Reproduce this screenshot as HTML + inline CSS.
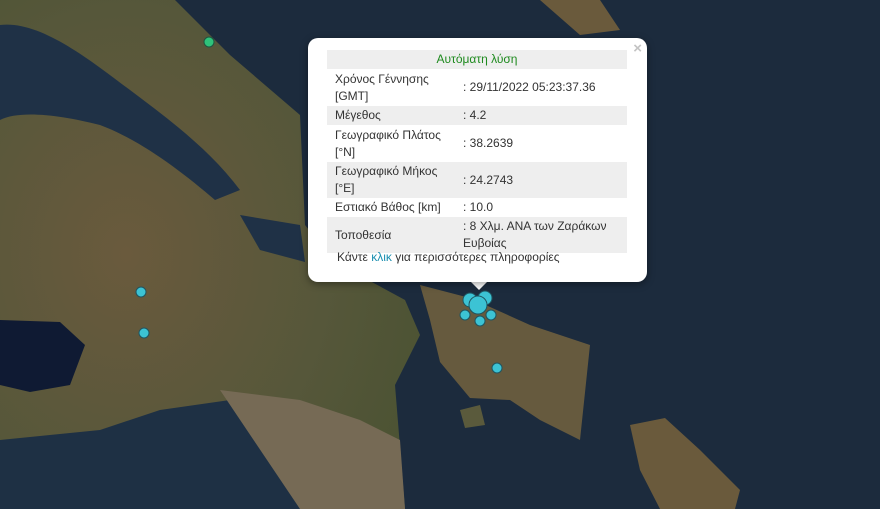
<!DOCTYPE html>
<html><head><meta charset="utf-8"><style>
body{margin:0;width:880px;height:509px;overflow:hidden;font-family:"Liberation Sans",sans-serif;position:relative;background:#1d2c3e}
svg{position:absolute;left:0;top:0}
.pop{position:absolute;left:308px;top:38px;width:339px;height:244px;background:#fff;border-radius:10px;box-shadow:0 2px 8px rgba(0,0,0,.4)}
.tip{position:absolute;left:470px;top:281px;width:0;height:0;border-left:9px solid transparent;border-right:9px solid transparent;border-top:9px solid #fff}
.x{position:absolute;right:5px;top:2px;color:#c3c3c3;font-size:15px;font-weight:bold}
table{position:absolute;left:19px;top:12px;width:300px;border-collapse:collapse;font-size:12px;color:#333;line-height:17px}
td{padding:1px 8px;vertical-align:middle}
tr.g{background:#eee}
.f{position:absolute;left:29px;top:212px;font-size:12px;color:#333}
</style></head><body>
<svg width="880" height="509" viewBox="0 0 880 509">
<defs><radialGradient id="lg" cx=".3" cy=".5" r=".8"><stop offset="0" stop-color="#6a5a3d"/><stop offset=".6" stop-color="#56573a"/><stop offset="1" stop-color="#4a5232"/></radialGradient></defs>
<rect width="880" height="509" fill="#1c2b3d"/>
<path d="M0 0H175L230 55L300 115L305 225L335 262L405 300L420 335L395 385L405 509H0Z" fill="url(#lg)"/>
<path d="M0 25C40 20 90 60 130 90C170 120 210 150 240 190L215 200C180 170 140 140 100 125C60 115 20 110 0 120Z" fill="#1f3146"/>
<path d="M240 215L300 225L305 262L260 250Z" fill="#1f3146"/>
<path d="M0 320L60 322L85 345L70 385L30 392L0 385Z" fill="#0f1a33"/>
<path d="M0 440L100 430L160 410L230 400L270 430L300 470L310 509H0Z" fill="#1e3044"/>
<path d="M220 390L300 400L360 420L400 440L405 509H300Z" fill="#766a55"/>
<path d="M420 285L470 298L530 325L590 345L580 440L540 420L510 400L470 398L440 362L430 320Z" fill="#665a3e"/>
<path d="M630 425L665 418L700 450L740 490L735 509H660L640 470Z" fill="#6a5a3c"/>
<path d="M540 0H600L620 30L580 35Z" fill="#6a5a3c"/>
<path d="M460 410L480 405L485 425L465 428Z" fill="#5a5a3c"/>
<g fill="#3cc3d4" stroke="#1f5560" stroke-width="1">
<circle cx="141" cy="292" r="5"/><circle cx="144" cy="333" r="5"/><circle cx="497" cy="368" r="5"/>
<circle cx="465" cy="315" r="5"/><circle cx="480" cy="321" r="5"/><circle cx="491" cy="315" r="5"/>
<circle cx="470" cy="300" r="7"/><circle cx="485" cy="298" r="7"/><circle cx="478" cy="305" r="9"/>
</g>
<circle cx="209" cy="42" r="5" fill="#2fc27a" stroke="#1f5540"/>
</svg>
<div class="tip"></div>
<div class="pop"><span class="x">×</span>
<table>
<tr class="g"><td colspan="2" style="text-align:center;color:#1e8a1e">Αυτόματη λύση</td></tr>
<tr><td style="height:35px;width:112px">Χρόνος Γέννησης<br>[GMT]</td><td>: 29/11/2022 05:23:37.36</td></tr>
<tr class="g"><td>Μέγεθος</td><td>: 4.2</td></tr>
<tr><td style="height:35px">Γεωγραφικό Πλάτος<br>[°N]</td><td>: 38.2639</td></tr>
<tr class="g"><td style="height:33px">Γεωγραφικό Μήκος<br>[°E]</td><td>: 24.2743</td></tr>
<tr><td>Εστιακό Βάθος [km]</td><td>: 10.0</td></tr>
<tr class="g"><td style="height:33px">Τοποθεσία</td><td>: 8 Χλμ. ΑΝΑ των Ζαράκων<br>Ευβοίας</td></tr>
</table>
<div class="f">Κάντε <span style="color:#1a8fb0">κλικ</span> για περισσότερες πληροφορίες</div>
</div>
</body></html>
